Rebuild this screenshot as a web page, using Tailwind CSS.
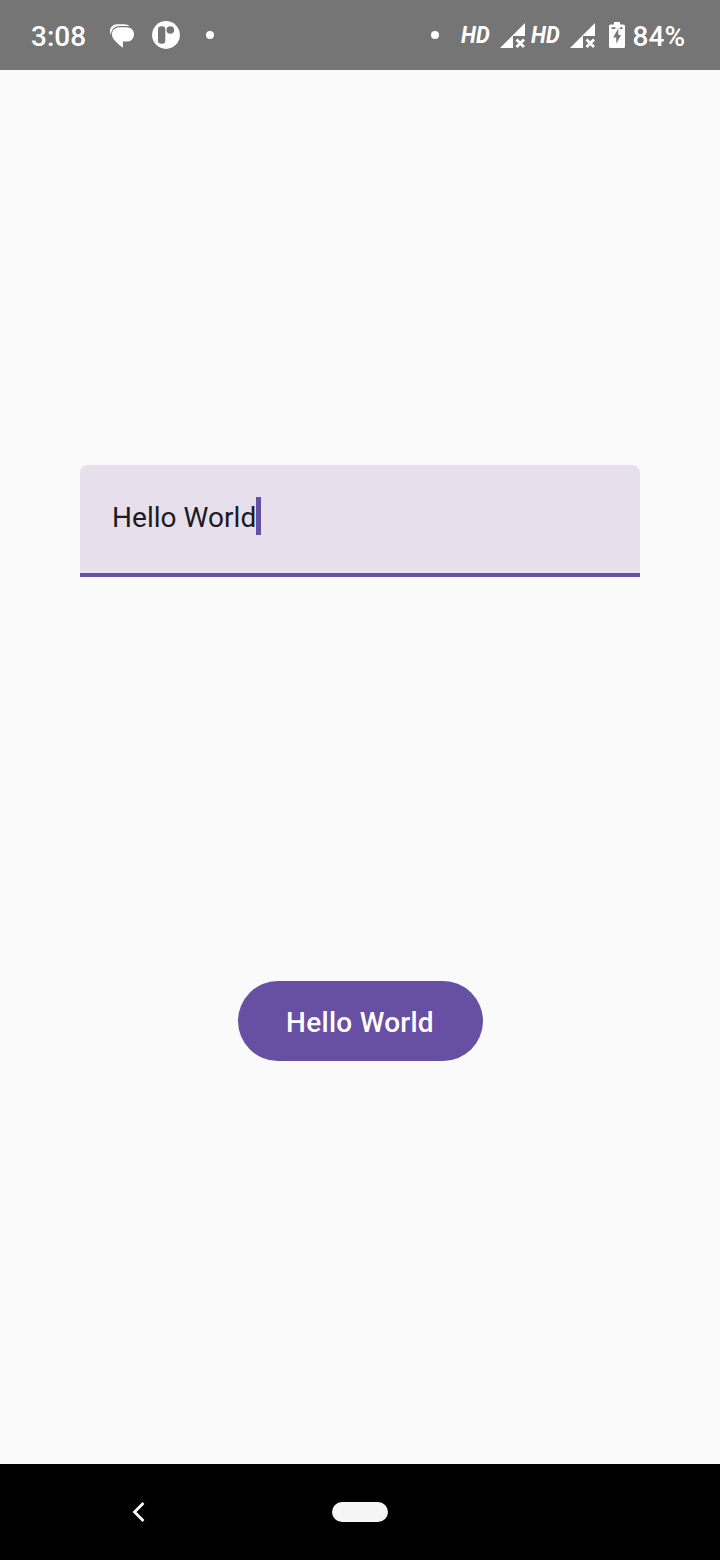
<!DOCTYPE html>
<html lang="en">
<head>
<meta charset="utf-8">
<title>Hello World</title>
<script src="https://cdn.jsdelivr.net/npm/@tailwindcss/browser@4"></script>
</head>
<body class="w-[720px] h-[1560px] flex flex-col overflow-hidden bg-[#fafafa] font-['Roboto',sans-serif]">
  <header class="h-[70px] shrink-0 flex items-start bg-[#757575] text-white pl-[31px] pr-[35px]">
    <span class="w-[79px] text-[28px] leading-[73px] font-medium">3:08</span>
    <svg class="mt-6 w-6 h-6" viewBox="0 0 24 24" fill="#fff">
      <path d="M1 11C.3 10 0 8.800 0 7.300C0 3.200 3 .2 7 .2H14.500C16.500 .2 18.300 .9 19.400 2.100H9.500C5 2.100 1.200 5 1 11Z"/>
      <path d="M9.300 3.200H17C21 3.200 24 6.200 24 10.200C24 14.500 21 17.600 17 17.600H12.900V23.800C9 20.800 6.500 18.500 4.300 16C2.800 14.300 2 12.500 2 10.200C2 6.200 5.200 3.200 9.300 3.200Z"/>
    </svg>
    <svg class="mt-[21px] ml-[18px] w-7 h-7" viewBox="0 0 28 28">
      <circle cx="14" cy="14" r="13.900" fill="#fff"/>
      <rect x="6" y="5.300" width="7.300" height="17.400" rx="3.200" fill="#757575"/>
      <circle cx="18.300" cy="9" r="3.800" fill="#757575"/>
    </svg>
    <span class="mt-[31px] ml-[26px] w-2 h-2 rounded-full bg-white"></span>
    <span class="mt-[31px] ml-auto w-2 h-2 rounded-full bg-white"></span>
    <span class="ml-[22px] w-[39px] text-[24px] leading-[71px] font-bold italic origin-left scale-x-[0.91]">HD</span>
    <svg class="mt-[23px] w-[25px] h-[25px]" viewBox="0 0 25 25">
      <path d="M25 0V13H13V25H0Z" fill="#fff"/>
      <path d="M16.500 16.500L24 24M24 16.500L16.500 24" stroke="#fff" stroke-width="2.800"/>
    </svg>
    <span class="ml-[6px] w-[39px] text-[24px] leading-[71px] font-bold italic origin-left scale-x-[0.91]">HD</span>
    <svg class="mt-[23px] w-[25px] h-[25px]" viewBox="0 0 25 25">
      <path d="M25 0V13H13V25H0Z" fill="#fff"/>
      <path d="M16.500 16.500L24 24M24 16.500L16.500 24" stroke="#fff" stroke-width="2.800"/>
    </svg>
    <svg class="mt-[22px] ml-[14px] w-4 h-[26px]" viewBox="0 0 16 26">
      <path d="M5 0H11V2.500H14.500Q16 2.500 16 4V24.500Q16 26 14.500 26H1.500Q0 26 0 24.500V4Q0 2.500 1.500 2.500H5Z" fill="#fff"/>
      <path d="M2.500 5.200H7L5.800 7H2.500ZM11 5.200H13.500V7H10.500ZM9.300 6.500V13H12L7.300 21.500V15.500H4.200Z" fill="#757575"/>
    </svg>
    <span class="ml-[8px] text-[28px] leading-[73px] font-medium">84%</span>
  </header>
  <main class="grow flex flex-col items-center">
    <div class="mt-[395px] w-[560px] h-28 rounded-t-[8px] bg-[#e7dfec] border-b-4 border-[#6750a4] flex items-start px-8 pt-8">
      <span class="text-[28px] leading-[41px] tracking-[0.04px] text-[#1c1b1f]">Hello World</span>
      <span class="w-[4.500px] h-[38px] bg-[#6750a4]"></span>
    </div>
    <button class="mt-[404px] ml-px w-[245px] h-20 rounded-full bg-[#6750a4] text-white text-[28px] leading-[80px] pt-[2px] pr-[1px] font-medium tracking-[0.26px]">Hello World</button>
  </main>
  <nav class="h-24 shrink-0 bg-black flex items-center">
    <svg class="ml-[132px] w-[13px] h-[20px]" viewBox="0 0 13 20" fill="none" stroke="#fff" stroke-width="2.800">
      <path d="M11.500 1L2.500 10L11.500 19"/>
    </svg>
    <span class="ml-[187px] w-14 h-5 rounded-full bg-[#f5f5f5]"></span>
  </nav>
</body>
</html>
